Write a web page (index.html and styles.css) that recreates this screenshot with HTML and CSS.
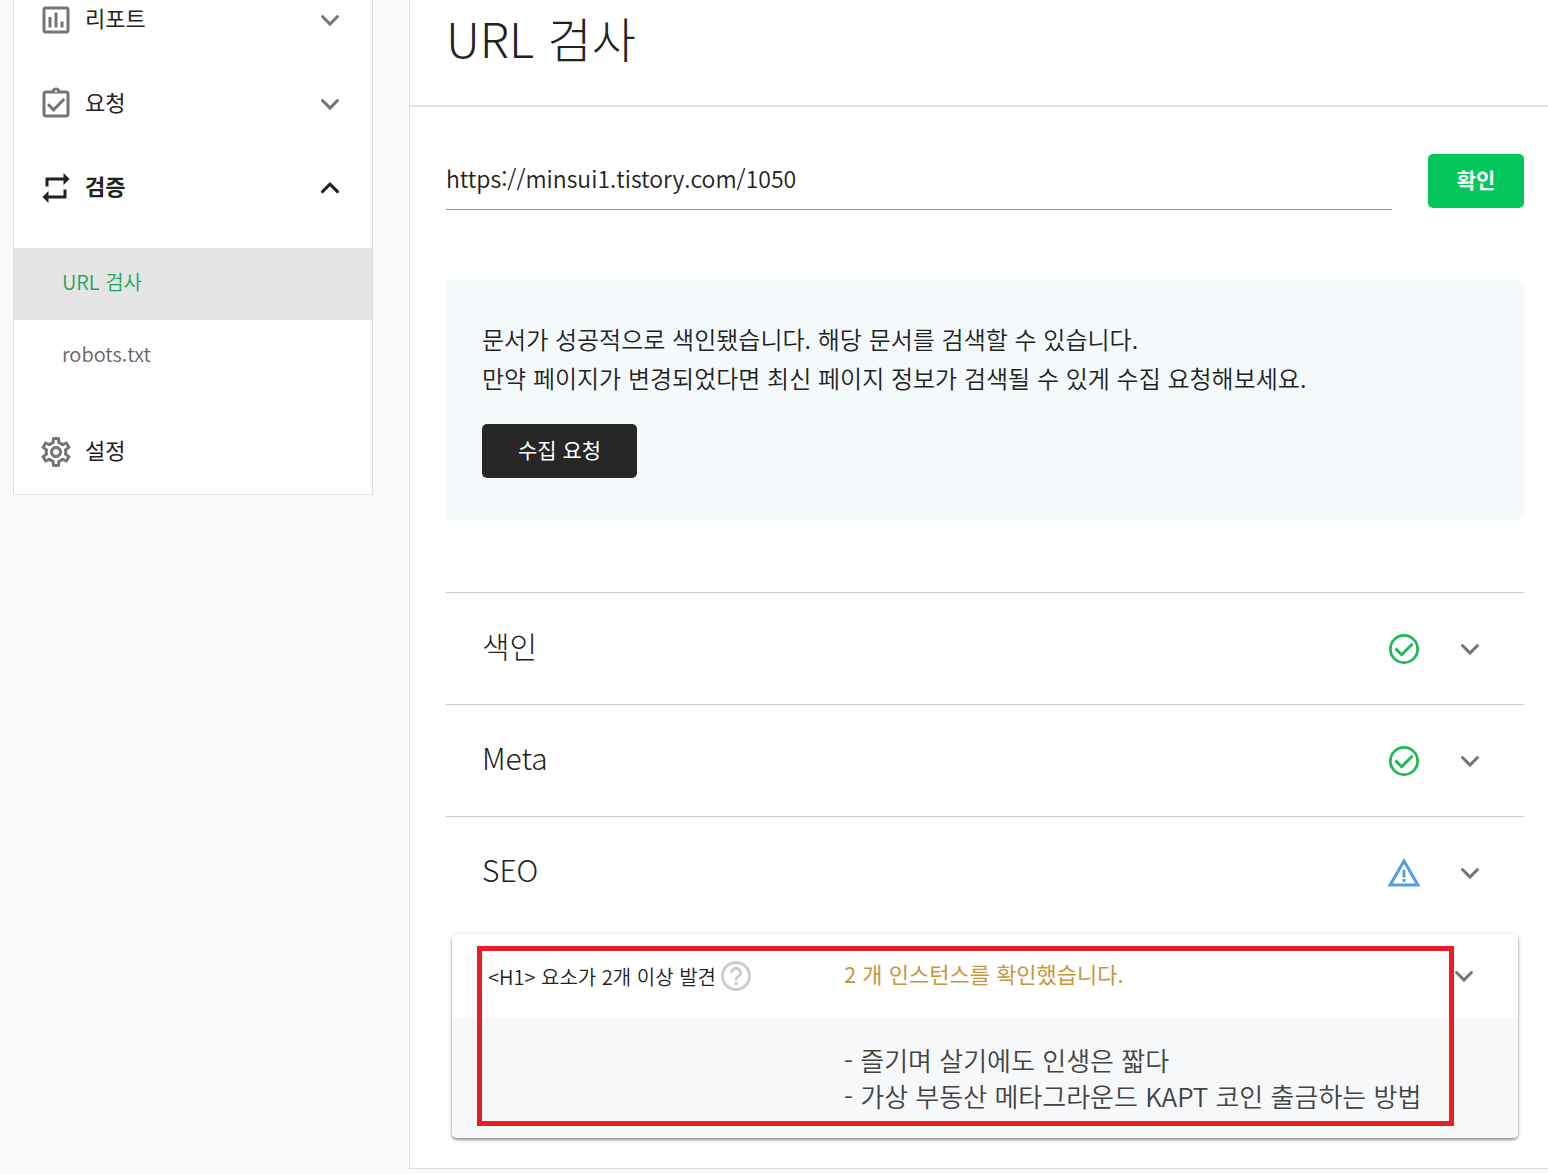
FILE: index.html
```html
<!DOCTYPE html>
<html lang="ko">
<head>
    <meta charset="UTF-8">
    <meta name="viewport" content="width=device-width, initial-scale=1.0">
    <title>URL 검사</title>
    <link rel="stylesheet" href="styles.css">
</head>
<body>
    <svg class="symbols" aria-hidden="true">
        <symbol id="down" viewBox="0 0 24 24"><path d="M7 9.7l5 5 5-5" fill="none" stroke="currentColor" stroke-width="2" stroke-linecap="round"/></symbol>
        <symbol id="up" viewBox="0 0 24 24"><path d="M7 14.4l5-5 5 5" fill="none" stroke="currentColor" stroke-width="2" stroke-linecap="round"/></symbol>
        <symbol id="ok" viewBox="0 0 24 24"><circle cx="12" cy="12" r="9.100" fill="none" stroke="currentColor" stroke-width="1.800"/><path d="M6.300 11.700l4.100 4.100 7.300-7.300" fill="none" stroke="currentColor" stroke-width="2"/></symbol>
    </svg>

    <nav class="sidebar">
        <button class="menu">
            <svg class="icon" viewBox="0 0 24 24"><path d="M9 17H7v-7h2v7zm4 0h-2V7h2v10zm4 0h-2v-4h2v4zm2 2H5V5h14v14zm0-16H5c-1.100 0-2 .9-2 2v14c0 1.100.9 2 2 2h14c1.100 0 2-.9 2-2V5c0-1.100-.9-2-2-2z"/></svg>
            <span>리포트</span>
            <svg class="icon arrow"><use href="#down"/></svg>
        </button>
        <button class="menu">
            <svg class="icon" viewBox="0 0 24 24"><path fill-rule="evenodd" d="M19 3h-4.180C14.400 1.840 13.300 1 12 1s-2.400.84-2.820 2H5c-1.100 0-2 .9-2 2v14c0 1.100.9 2 2 2h14c1.100 0 2-.9 2-2V5c0-1.100-.9-2-2-2zm-7-.25c.41 0 .75.340.75.75s-.34.750-.75.750-.75-.34-.75-.75.340-.75.750-.75zM19 19H5V5h14v14z"/><path d="M6.700 12.200l3.700 3.700 7.100-7.200" fill="none" stroke="currentColor" stroke-width="2"/></svg>
            <span>요청</span>
            <svg class="icon arrow"><use href="#down"/></svg>
        </button>
        <button class="menu open">
            <svg class="icon" viewBox="0 0 24 24"><path d="M7 7h10v3l4-4-4-4v3H5v6h2V7zm10 10H7v-3l-4 4 4 4v-3h12v-6h-2v4z"/></svg>
            <span>검증</span>
            <svg class="icon arrow"><use href="#up"/></svg>
        </button>
        <div class="submenu">
            <a class="active" href="#">URL 검사</a>
            <a href="#">robots.txt</a>
        </div>
        <button class="menu">
            <svg class="icon" viewBox="0 0 24 24"><path d="M19.430 12.980c.04-.32.070-.64.070-.98 0-.34-.03-.66-.07-.98l2.110-1.650c.19-.15.240-.42.120-.64l-2-3.460c-.09-.16-.26-.25-.44-.25-.06 0-.12.010-.17.030l-2.490 1c-.52-.4-1.080-.73-1.690-.98l-.38-2.650C14.460 2.180 14.250 2 14 2h-4c-.25 0-.46.180-.49.420l-.38 2.650c-.61.250-1.170.590-1.690.980l-2.490-1c-.06-.02-.12-.03-.18-.03-.17 0-.34.090-.43.250l-2 3.460c-.13.220-.07.490.120.640l2.110 1.650c-.04.320-.07.650-.07.980 0 .33.030.660.070.980l-2.110 1.650c-.19.150-.24.420-.12.640l2 3.460c.09.160.260.250.440.250.06 0 .12-.01.170-.03l2.490-1c.52.400 1.080.730 1.690.980l.38 2.650c.03.240.240.420.490.420h4c.25 0 .46-.18.490-.42l.38-2.650c.61-.25 1.170-.59 1.690-.98l2.490 1c.06.020.120.030.180.030.17 0 .34-.09.430-.25l2-3.460c.12-.22.070-.49-.12-.64l-2.110-1.650zm-1.980-1.710c.04.310.050.520.050.730 0 .21-.02.430-.05.730l-.14 1.130.89.700 1.080.840-.7 1.210-1.270-.51-1.040-.42-.9.680c-.43.320-.84.560-1.250.730l-1.060.430-.16 1.130-.2 1.350h-1.400l-.19-1.350-.16-1.130-1.060-.43c-.43-.18-.83-.41-1.230-.71l-.91-.7-1.060.430-1.270.510-.7-1.210 1.080-.84.890-.7-.14-1.130c-.03-.31-.05-.54-.05-.74s.02-.43.050-.73l.14-1.130-.89-.7-1.080-.84.700-1.210 1.270.510 1.040.420.900-.68c.43-.32.840-.56 1.250-.73l1.060-.43.160-1.130.2-1.350h1.390l.19 1.350.16 1.130 1.060.430c.43.180.830.410 1.230.710l.91.700 1.060-.43 1.270-.51.700 1.210-1.070.850-.89.700.14 1.130zM12 8c-2.210 0-4 1.790-4 4s1.790 4 4 4 4-1.790 4-4-1.790-4-4-4zm0 6c-1.100 0-2-.9-2-2s.9-2 2-2 2 .9 2 2-.9 2-2 2z"/></svg>
            <span>설정</span>
        </button>
    </nav>

    <main class="content">
        <h1>URL 검사</h1>

        <form class="search">
            <input type="text" aria-label="URL" value="https://minsui1.tistory.com/1050">
            <button class="btn green" type="button">확인</button>
        </form>

        <div class="info">
            <p>문서가 성공적으로 색인됐습니다. 해당 문서를 검색할 수 있습니다.<br>
            만약 페이지가 변경되었다면 최신 페이지 정보가 검색될 수 있게 수집 요청해보세요.</p>
            <button class="btn dark" type="button">수집 요청</button>
        </div>

        <div class="results">
            <button class="result">
                <span>색인</span>
                <svg class="icon ok"><use href="#ok"/></svg>
                <svg class="icon"><use href="#down"/></svg>
            </button>
            <button class="result">
                <span>Meta</span>
                <svg class="icon ok"><use href="#ok"/></svg>
                <svg class="icon"><use href="#down"/></svg>
            </button>
            <button class="result">
                <span>SEO</span>
                <svg class="icon warn" viewBox="0 0 24 24"><path d="M12 5.990L19.530 19H4.470L12 5.990M12 2L1 21h22L12 2zm1 14h-2v2h2v-2zm0-6h-2v5h2v-5z"/></svg>
                <svg class="icon"><use href="#down"/></svg>
            </button>
        </div>

        <div class="card">
            <button class="card-head">
                <span class="label">&lt;H1&gt; 요소가 2개 이상 발견
                    <svg class="icon help" viewBox="0 0 24 24"><path d="M11 18h2v-2h-2v2zm1-16C6.480 2 2 6.480 2 12s4.480 10 10 10 10-4.480 10-10S17.520 2 12 2zm0 18c-4.410 0-8-3.590-8-8s3.590-8 8-8 8 3.590 8 8-3.590 8-8 8zm0-14c-2.210 0-4 1.790-4 4h2c0-1.100.9-2 2-2s2 .9 2 2c0 2-3 1.750-3 5h2c0-2.250 3-2.500 3-5 0-2.210-1.790-4-4-4z"/></svg>
                </span>
                <span class="count">2 개 인스턴스를 확인했습니다.</span>
                <svg class="icon"><use href="#down"/></svg>
            </button>
            <div class="card-body">
                - 즐기며 살기에도 인생은 짧다<br>
                - 가상 부동산 메타그라운드 KAPT 코인 출금하는 방법
            </div>
            <div class="mark"></div>
        </div>
    </main>
</body>
</html>
```

FILE: styles.css
```css
* {
    box-sizing: border-box;
}

body {
    margin: 0;
    padding: 0 0 5px 13px;
    display: flex;
    align-items: flex-start;
    gap: 36px;
    background: #fafafa;
    color: #222;
    font-family: "Noto Sans CJK KR", sans-serif;
    font-weight: 350;
}

button, input {
    font: inherit;
    color: inherit;
    border: none;
    background: none;
    padding: 0;
}

button {
    cursor: pointer;
    text-align: left;
}

.symbols {
    display: none;
}

.icon {
    width: 36px;
    height: 36px;
    flex: none;
    color: #757575;
    fill: currentColor;
}

/* left menu */
.sidebar {
    flex: 0 0 360px;
    margin-top: -22px;
    background: #fff;
    border: 1px solid #ddd;
    border-top: none;
}

.menu {
    display: flex;
    align-items: center;
    gap: 11px;
    width: 100%;
    height: 84px;
    padding: 0 24px;
    font-size: 22px;
    line-height: 32px;
    font-weight: 400;
}

.menu span {
    padding-bottom: 7px;
}

.menu .arrow {
    margin-left: auto;
}

.menu.open {
    font-weight: 700;
}

.menu.open .icon {
    color: #222;
}

.submenu {
    padding: 18px 0;
}

.submenu a {
    display: block;
    padding: 0 48px 4px;
    font-size: 20px;
    line-height: 68px;
    color: #666;
    text-decoration: none;
}

.submenu .active {
    background: #e5e5e5;
    color: #1fa35b;
}

/* right side */
.content {
    flex: 1;
    min-width: 0;
    padding-bottom: 30px;
    background: #fff;
    border-left: 1px solid #ddd;
    border-bottom: 1px solid #ddd;
}

h1 {
    margin: 0;
    padding: 1px 36px 32px;
    font-size: 48px;
    line-height: 72px;
    font-weight: 300;
    border-bottom: 2px solid #e0e0e0;
}

.search {
    display: flex;
    gap: 36px;
    margin: 47px 24px 70px 36px;
}

.search input {
    flex: 1;
    min-width: 0;
    height: 56px;
    padding-bottom: 7px;
    font-size: 23px;
    border-bottom: 1px solid #949494;
    outline: none;
}

.btn {
    height: 54px;
    padding: 0 36px 5px;
    border-radius: 5px;
    font-size: 21px;
    color: #fff;
    text-align: center;
}

.green {
    width: 96px;
    padding: 0 0 5px;
    background: #03c75a;
    font-weight: 700;
}

.dark {
    background: #272727;
    font-weight: 400;
}

.info {
    margin: 0 24px 72px 36px;
    padding: 39px 36px 42px;
    background: #f4f9fc;
    border-radius: 6px;
}

.info p {
    margin: 0 0 27px;
    font-size: 24px;
    line-height: 39px;
}

.info .btn {
    display: block;
}

.results {
    margin: 0 24px 6px 36px;
}

.result {
    display: flex;
    align-items: center;
    gap: 30px;
    width: 100%;
    height: 112px;
    padding: 0 36px;
    border-top: 1px solid #ccc;
    font-size: 30px;
    font-weight: 300;
}

.result span {
    flex: 1;
    padding-bottom: 8px;
}

.result .ok {
    color: #1db954;
}

.result .warn {
    color: #509fe2;
}

.card {
    position: relative;
    margin: 0 30px 0 42px;
    background: #fff;
    border-radius: 5px;
    box-shadow: 0 2px 3px rgba(0, 0, 0, 0.4), 0 0 5px rgba(0, 0, 0, 0.12);
}

.card-head {
    display: flex;
    align-items: center;
    width: 100%;
    height: 84px;
    padding: 0 36px;
}

.label {
    flex: 0 0 356px;
    display: flex;
    align-items: center;
    gap: 2px;
    font-size: 20px;
}

.label .help {
    color: #ccc;
}

.count {
    flex: 1;
    padding-bottom: 6px;
    font-size: 22px;
    font-weight: 400;
    color: #c7963a;
}

.card-body {
    padding: 24px 36px 24px 392px;
    font-size: 26px;
    line-height: 36px;
    color: #444;
    background: #f6f8fa;
    border-radius: 0 0 5px 5px;
}

/* red frame over the card */
.mark {
    position: absolute;
    top: 12px;
    right: 64px;
    bottom: 12px;
    left: 25px;
    border: 5px solid #e91d25;
    pointer-events: none;
}
```
